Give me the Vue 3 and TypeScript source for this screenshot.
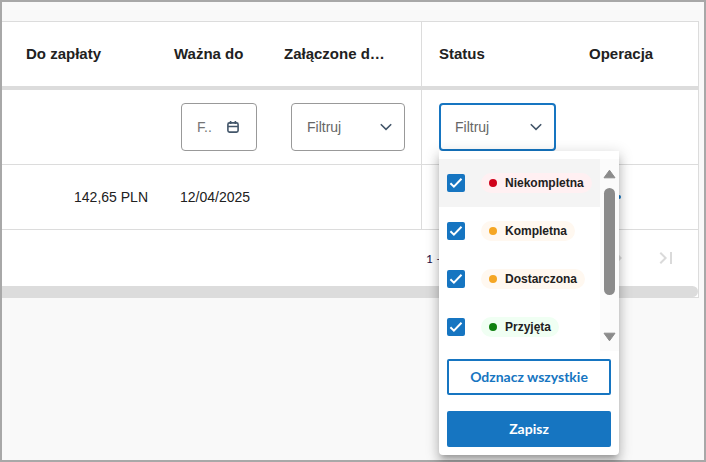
<script setup lang="ts">
import { ref } from 'vue'

interface StatusOption {
  label: string
  tone: 'red' | 'amber' | 'green'
  checked: boolean
}

const statuses = ref<StatusOption[]>([
  { label: 'Niekompletna', tone: 'red', checked: true },
  { label: 'Kompletna', tone: 'amber', checked: true },
  { label: 'Dostarczona', tone: 'amber', checked: true },
  { label: 'Przyjęta', tone: 'green', checked: true },
])

const open = ref(true)
const dueDate = ref('')

function clearAll(): void {
  statuses.value.forEach((s) => (s.checked = false))
}
</script>

<template>
  <main class="frame">
    <section class="panel">
      <table class="grid">
        <colgroup>
          <col />
          <col class="col-date" />
          <col class="col-files" />
          <col class="col-status" />
          <col class="col-action" />
        </colgroup>
        <thead>
          <tr class="head">
            <th class="amount-head">Do zapłaty</th>
            <th>Ważna do</th>
            <th>Załączone d…</th>
            <th class="status">Status</th>
            <th>Operacja</th>
          </tr>
          <tr class="filters">
            <td></td>
            <td class="inset">
              <label class="field date">
                <input v-model="dueDate" type="text" placeholder="F.." aria-label="Ważna do" />
                <svg class="calendar" viewBox="0 0 12 12" aria-hidden="true">
                  <rect x="0.9" y="1.9" width="10.2" height="9.2" rx="1.6" />
                  <path d="M1 5.5h10M3.6 0v3M8.4 0v3" />
                </svg>
              </label>
            </td>
            <td class="inset">
              <label class="field">
                <select aria-label="Załączone d…">
                  <option>Filtruj</option>
                </select>
                <svg class="chevron" viewBox="0 0 12 8" aria-hidden="true"><path d="M0.8 1.2L6 6.4l5.2-5.2" /></svg>
              </label>
            </td>
            <td class="status">
              <div class="anchor">
                <button class="field trigger" type="button" aria-haspopup="listbox" :aria-expanded="open" @click="open = !open">
                  <span>Filtruj</span>
                  <svg class="chevron" viewBox="0 0 12 8" aria-hidden="true"><path d="M0.8 1.2L6 6.4l5.2-5.2" /></svg>
                </button>
                <div v-if="open" class="popup">
                  <div class="scroller">
                    <ul class="options">
                      <li v-for="(s, i) in statuses" :key="s.label">
                        <label class="option" :class="{ active: i === 0 }">
                          <input v-model="s.checked" type="checkbox" />
                          <svg class="tick" viewBox="0 0 18 18" aria-hidden="true"><path d="M3.4 9.2l3.5 3.4 7.6-7.8" /></svg>
                          <span class="chip" :class="s.tone"><i class="dot"></i>{{ s.label }}</span>
                        </label>
                      </li>
                    </ul>
                    <div class="track" aria-hidden="true">
                      <svg class="arrow" viewBox="0 0 13 10"><path d="M6.5 1.2L12 8.8H1z" /></svg>
                      <div class="thumb"></div>
                      <svg class="arrow" viewBox="0 0 13 10"><path d="M6.5 8.8L12 1.2H1z" /></svg>
                    </div>
                  </div>
                  <div class="actions">
                    <button class="btn outline" type="button" @click="clearAll">Odznacz wszystkie</button>
                    <button class="btn solid" type="button" @click="open = false">Zapisz</button>
                  </div>
                </div>
              </div>
            </td>
            <td></td>
          </tr>
        </thead>
        <tbody>
          <tr class="row">
            <td class="amount">142,65 PLN</td>
            <td class="inset">12/04/2025</td>
            <td></td>
            <td class="status"><span class="chip red"><i class="dot"></i></span></td>
            <td>
              <button class="more" type="button" aria-label="Operacja">
                <svg viewBox="0 0 18 18" aria-hidden="true">
                  <circle cx="3" cy="9" r="2" /><circle cx="9" cy="9" r="2" /><circle cx="15" cy="9" r="2" />
                </svg>
              </button>
            </td>
          </tr>
        </tbody>
      </table>
      <nav class="pager">
        <span class="range">1 –</span>
        <button type="button" disabled aria-label="Następna strona">
          <svg viewBox="0 0 24 24"><path d="M10 6L8.59 7.41 13.17 12l-4.58 4.59L10 18l6-6z" /></svg>
        </button>
        <button type="button" disabled aria-label="Ostatnia strona">
          <svg viewBox="0 0 24 24"><path d="M5.59 7.41L10.18 12l-4.59 4.59L7 18l6-6-6-6zM16 6h2v12h-2z" /></svg>
        </button>
      </nav>
      <div class="hbar"><div class="hthumb"></div></div>
    </section>
  </main>
</template>

<style>
body {
  margin: 0;
}
</style>

<style scoped>
* {
  box-sizing: border-box;
}
.frame {
  min-height: 100vh;
  padding: 19px 5px 0 0;
  border: 2px solid #a8a8a8;
  background: #f9f9f9;
  color: #212121;
  font-family: "Liberation Sans", Arial, sans-serif;
  font-size: 14px;
}
button,
input,
select {
  font: inherit;
}
.panel {
  border: 1px solid #dcdcdc;
  border-left: 0;
  background: #fff;
}
.grid {
  width: 100%;
  table-layout: fixed;
  border-collapse: separate;
  border-spacing: 0;
}
.col-date {
  width: 110px;
}
.col-files {
  width: 153px;
}
.col-status {
  width: 152px;
}
.col-action {
  width: 125px;
}
th,
td {
  padding: 0 16px;
  text-align: left;
  border-bottom: 1px solid #dcdcdc;
}
.head th {
  height: 68px;
  border-bottom: 4px solid #dcdcdc;
  font-size: 15px;
  line-height: 20px;
  white-space: nowrap;
}
.head .amount-head {
  padding-left: 24px;
}
.filters td {
  height: 75px;
}
.row td {
  height: 65px;
}
td.inset {
  padding: 0 16px 0 22px;
}
.grid .status {
  padding: 0 17px;
  border-left: 1px solid #dcdcdc;
}
td.amount {
  padding-right: 10px;
  text-align: right;
}
.filters td.inset {
  padding: 0 11px 0 23px;
}
.filters td.inset + td.inset {
  padding-right: 16px;
}
.field {
  display: flex;
  align-items: center;
  justify-content: space-between;
  width: 100%;
  height: 48px;
  padding: 0 12px 0 15px;
  border: 1px solid #999;
  border-radius: 4px;
  background: #fff;
  color: #666;
}
.date {
  padding-right: 17px;
}
.field input,
.field select {
  flex: 1;
  min-width: 0;
  width: 100%;
  padding: 0;
  border: 0;
  outline: 0;
  background: none;
  color: #666;
  appearance: none;
}
.field input::placeholder {
  color: #757575;
  opacity: 1;
}
.trigger {
  width: 117px;
  padding: 0 12px 0 14px;
  border: 2px solid #1675c1;
}
.chevron {
  width: 12px;
  height: 8px;
  flex: none;
}
.calendar {
  width: 12px;
  height: 12px;
  flex: none;
}
.chevron path,
.calendar rect,
.calendar path {
  fill: none;
  stroke: #43566a;
  stroke-width: 1.6;
}
.anchor {
  position: relative;
}
.popup {
  position: absolute;
  top: 100%;
  left: 0;
  z-index: 2;
  width: 180px;
  padding-top: 8px;
  border-radius: 0 0 4px 4px;
  background: #fff;
  box-shadow: 0 5px 5px -3px rgba(0, 0, 0, 0.2), 0 8px 10px 1px rgba(0, 0, 0, 0.14), 0 3px 14px 2px rgba(0, 0, 0, 0.14);
}
.scroller {
  display: flex;
}
.options {
  flex: 1;
  margin: 0;
  padding: 0;
  list-style: none;
}
.option {
  display: grid;
  grid-template-columns: 18px 1fr;
  align-items: center;
  justify-items: start;
  column-gap: 16px;
  height: 48px;
  padding-left: 8px;
}
.option.active {
  background: #f4f4f4;
}
.option input {
  grid-area: 1 / 1;
  width: 18px;
  height: 18px;
  margin: 0;
  border: 2px solid #1675c1;
  border-radius: 2px;
  appearance: none;
}
.option input:checked {
  background: #1675c1;
}
.tick {
  grid-area: 1 / 1;
  width: 18px;
  height: 18px;
  pointer-events: none;
}
.tick path {
  fill: none;
  stroke: #fff;
  stroke-width: 2;
}
.chip {
  display: inline-flex;
  align-items: center;
  gap: 8px;
  height: 20px;
  padding: 0 8px;
  border-radius: 10px;
  font-size: 12px;
  font-weight: 700;
}
.dot {
  width: 8px;
  height: 8px;
  border-radius: 50%;
}
.red {
  background: #fff0f2;
}
.red .dot {
  background: #d0021b;
}
.amber {
  background: #fff8f0;
}
.amber .dot {
  background: #f5a623;
}
.green {
  background: #f0fff3;
}
.green .dot {
  background: #108010;
}
.track {
  display: flex;
  flex-direction: column;
  align-items: center;
  width: 19px;
  padding: 10px 0 9px;
  background: #fbfbfb;
}
.arrow {
  width: 13px;
  height: 10px;
}
.arrow path {
  fill: #8b8b8b;
  stroke: #8b8b8b;
  stroke-linejoin: round;
}
.thumb {
  width: 11px;
  height: 107px;
  margin: 9px 0 auto;
  border-radius: 6px;
  background: #8b8b8b;
}
.actions {
  display: grid;
  gap: 16px;
  padding: 8px;
}
.btn {
  height: 36px;
  padding: 0 0 2px;
  border: 2px solid #1675c1;
  border-radius: 2px;
  font-family: Lato, sans-serif;
  font-size: 14px;
  font-weight: 700;
}
.outline {
  background: #fff;
  color: #1675c1;
}
.solid {
  background: #1675c1;
  color: #fff;
}
.more {
  display: block;
  width: 18px;
  height: 18px;
  margin-left: 15px;
  padding: 0;
  border: 0;
  background: none;
}
.more svg {
  display: block;
  fill: #1675c1;
}
.pager {
  display: flex;
  align-items: center;
  justify-content: flex-end;
  height: 56px;
  padding-right: 8px;
}
.range {
  width: 168px;
  color: #1c1048;
  font-family: Lato, sans-serif;
  font-size: 12px;
}
.pager button {
  width: 48px;
  height: 48px;
  padding: 12px;
  border: 0;
  background: none;
}
.pager svg {
  display: block;
  width: 24px;
  height: 24px;
  fill: #dadada;
}
.hbar {
  overflow: hidden;
}
.hthumb {
  height: 11px;
  border-radius: 0 6px 6px 0;
  background: #dcdcdc;
}
</style>
